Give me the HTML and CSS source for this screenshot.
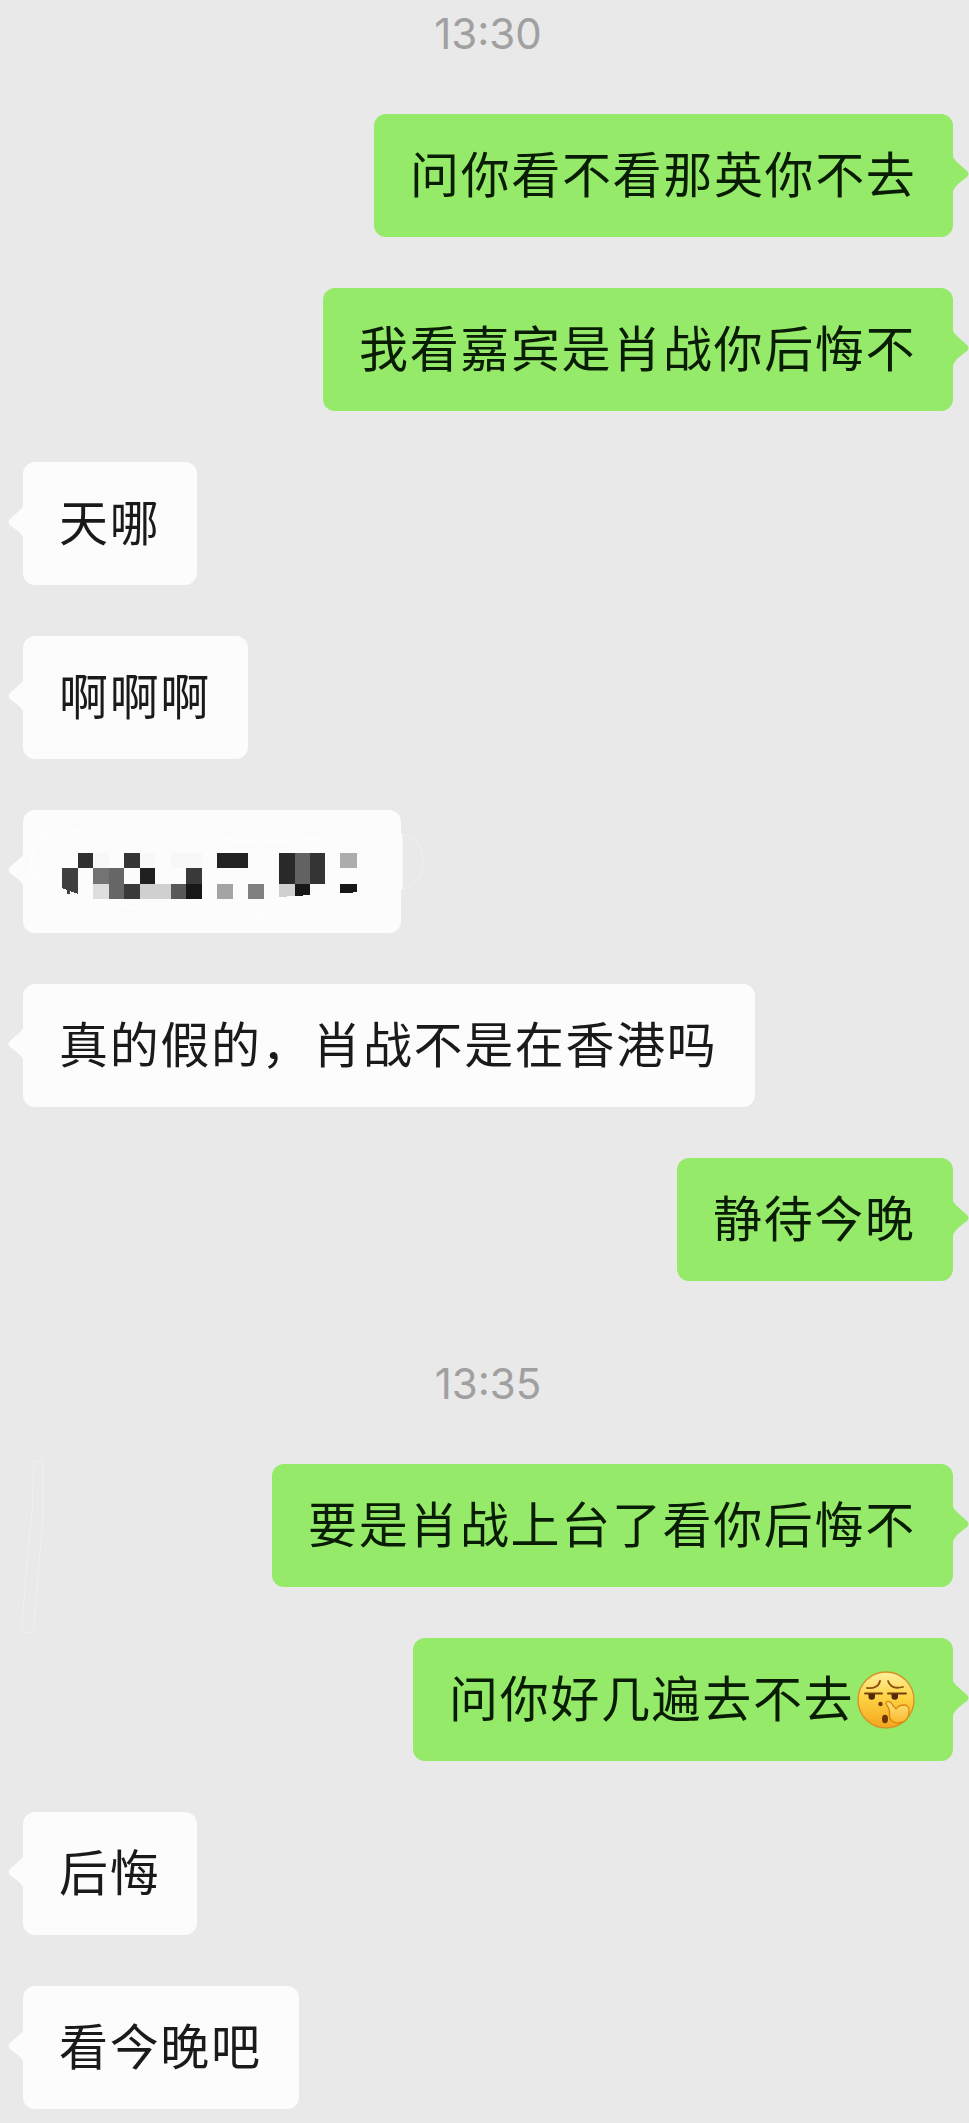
FILE: index.html
```html
<!DOCTYPE html>
<html lang="zh-CN">
<head>
<meta charset="utf-8">
<title>聊天</title>
<link rel="stylesheet" href="styles.css">
</head>
<body>
<main class="chat">
  <time class="stamp">13:30</time>
  <div class="bubble sent" style="--w:579px">问你看不看那英你不去<svg class="tail" viewBox="0 0 16 34"><path d="M0 0C2 3 3 4 5 6L14 14Q17 17 14 20L5 27Q2 30 0 34Z"/></svg></div>
  <div class="bubble sent" style="--w:630px">我看嘉宾是肖战你后悔不<svg class="tail" viewBox="0 0 16 34"><path d="M0 0C2 3 3 4 5 6L14 14Q17 17 14 20L5 27Q2 30 0 34Z"/></svg></div>
  <div class="bubble received" style="--w:174px">天哪<svg class="tail" viewBox="0 0 16 34"><path d="M0 0C2 3 3 4 5 6L14 14Q17 17 14 20L5 27Q2 30 0 34Z"/></svg></div>
  <div class="bubble received" style="--w:225px">啊啊啊<svg class="tail" viewBox="0 0 16 34"><path d="M0 0C2 3 3 4 5 6L14 14Q17 17 14 20L5 27Q2 30 0 34Z"/></svg></div>
  <div class="bubble received" style="--w:378px">
    <svg class="mosaic" viewBox="0 800 440 150">
      <path fill="#fcfcfc" d="M400 834H402.5V889H400Z"/>
      <g fill="none" stroke="#fff" stroke-width="1.2">
        <path d="M31 868C31 845 42 829 60 829C78 829 82 834 96 834H180C213 834 228 842 260 842C300 841 350 834 399 834"/>
        <path d="M31 868C38 888 75 887 98 899C129 906 155 917 190 917H249C276 916 271 895 290 895C323 891 361 889 402 889"/>
      </g>
      <path fill="none" stroke="#f1f1f1" d="M403 835C417 837 423 850 423 861C423 876 414 887 402 889"/>
      <g shape-rendering="crispEdges">
        <path fill="#303030" d="M78 853h15v15H78z"/>
        <path fill="#353535" d="M124 853h16v15h-16z"/>
        <path fill="#f8f8f8" d="M93 853h16v15H93zM140 853h15v15h-15zM171 853h31v15h-31z"/>
        <path fill="#404040" d="M62 868h16v26l-8-3v3h-3v-4l-5-2z"/>
        <path fill="#737373" d="M93 868h16v16H93z"/>
        <path fill="#666" d="M109 868h15v31h-15z"/>
        <path fill="#202020" d="M140 868h15v16h-15z"/>
        <path fill="#393939" d="M186 868h16v16h-16zM124 884h16v15h-16z"/>
        <path fill="#dedede" d="M93 884h16v15H93z"/>
        <path fill="#d0d0d0" d="M140 884h31v15h-31zM279 884h16v12l-16 1z"/>
        <path fill="#585858" d="M171 884h15v15h-15z"/>
        <path fill="#171717" d="M186 884h16v15h-16zM295 884h15v11l-15 1zM340 884h17v8l-9 1h-8z"/>
        <path fill="#232323" d="M217 853h31v15h-31z"/>
        <path fill="#a4a4a4" d="M217 884h16v15h-16z"/>
        <path fill="#808080" d="M248 884h16v15h-16z"/>
        <path fill="#292929" d="M279 853h16v31h-16z"/>
        <path fill="#626262" d="M295 853h15v31h-15z"/>
        <path fill="#343434" d="M310 853h15v31h-15z"/>
        <path fill="#acacac" d="M340 853h17v15h-17z"/>
      </g>
    </svg>
    <svg class="tail" viewBox="0 0 16 34"><path d="M0 0C2 3 3 4 5 6L14 14Q17 17 14 20L5 27Q2 30 0 34Z"/></svg>
  </div>
  <div class="bubble received" style="--w:732px">真的假的，肖战不是在香港吗<svg class="tail" viewBox="0 0 16 34"><path d="M0 0C2 3 3 4 5 6L14 14Q17 17 14 20L5 27Q2 30 0 34Z"/></svg></div>
  <div class="bubble sent" style="--w:276px">静待今晚<svg class="tail" viewBox="0 0 16 34"><path d="M0 0C2 3 3 4 5 6L14 14Q17 17 14 20L5 27Q2 30 0 34Z"/></svg></div>
  <time class="stamp later">13:35</time>
  <div class="bubble sent" style="--w:681px">要是肖战上台了看你后悔不<svg class="tail" viewBox="0 0 16 34"><path d="M0 0C2 3 3 4 5 6L14 14Q17 17 14 20L5 27Q2 30 0 34Z"/></svg></div>
  <div class="bubble sent" style="--w:540px">问你好几遍去不去<svg class="emoji" viewBox="0 0 58 58">
      <defs>
        <linearGradient id="face" x1="0" y1="0" x2="0" y2="1"><stop offset="0" stop-color="#fff0a0"/><stop offset=".45" stop-color="#fed344"/><stop offset="1" stop-color="#f5a51d"/></linearGradient>
        <linearGradient id="hand" x1="0" y1="0" x2="0" y2="1"><stop offset="0" stop-color="#ffe27a"/><stop offset="1" stop-color="#fbb72c"/></linearGradient>
      </defs>
      <circle cx="29" cy="29" r="28" fill="url(#face)" stroke="#d99025" stroke-width="1.3"/>
      <g fill="none" stroke="#8a4f0b" stroke-width="1.8" stroke-linecap="round">
        <path d="M10 17C17 18 22 15 23 10M31 10C33 16 38 18 46 16"/>
      </g>
      <path d="M8 22.5H25M31 22.5H49" stroke="#744009" stroke-width="1.8" stroke-linecap="round"/>
      <path d="M11.5 23h6.5v2.500a3.200 3.200 0 0 1-6.500 0zM34.500 23H41v2.500a3.200 3.200 0 0 1-6.500 0z" fill="#50290b"/>
      <circle cx="23.500" cy="33" r="2.200" fill="#6b3b0b"/>
      <ellipse cx="28" cy="48" rx="3" ry="4.200" fill="#693406"/>
      <path d="M29.500 31C31.500 29.500 34 31 36 34.500L39 38C41 35 44 34 47 34C51 34 52.500 37 52 41C52 47 48 51.500 42 52C36 52.500 32 49 32.500 44C33 40 32 37 30 34.500C29 33 28.500 32 29.500 31Z" fill="url(#hand)" stroke="#d98713" stroke-width="1.3"/>
    </svg><svg class="tail" viewBox="0 0 16 34"><path d="M0 0C2 3 3 4 5 6L14 14Q17 17 14 20L5 27Q2 30 0 34Z"/></svg></div>
  <div class="bubble received" style="--w:174px">后悔<svg class="tail" viewBox="0 0 16 34"><path d="M0 0C2 3 3 4 5 6L14 14Q17 17 14 20L5 27Q2 30 0 34Z"/></svg></div>
  <div class="bubble received" style="--w:276px">看今晚吧<svg class="tail" viewBox="0 0 16 34"><path d="M0 0C2 3 3 4 5 6L14 14Q17 17 14 20L5 27Q2 30 0 34Z"/></svg></div>
  <svg class="trace" viewBox="0 0 24 176"><path d="M11 52L13 2Q18-1 22 3V56L13 165Q12 173 6 173Q1 173 1 164L5 113Z"/></svg>
</main>
</body>
</html>
```
FILE: styles.css
```css
* { box-sizing: border-box; }
body { margin: 0; background: #e9e9e9; }
.chat {
  position: relative;
  display: flex;
  flex-direction: column;
  gap: 51px;
  height: 2123px;
  padding: 0 16px 0 23px;
  overflow: hidden;
  font-family: "Noto Sans CJK SC", sans-serif;
}
.stamp {
  flex: none;
  height: 63px;
  padding-top: 9px;
  text-align: center;
  font: 400 42px/50px Inter, sans-serif;
  color: #a0a0a0;
}
.later { height: 81px; padding-top: 27px; }
.bubble {
  position: relative;
  flex: none;
  display: flex;
  align-items: center;
  width: var(--w);
  height: 123px;
  padding: 0 0 7px 36px;
  border-radius: 12px;
  font-size: 49px;
  line-height: 70px;
  letter-spacing: 1.65px;
  white-space: nowrap;
}
.sent { align-self: flex-end; background: #95ea69; color: #091c04; fill: #95ea69; }
.received { align-self: flex-start; background: #fcfcfc; color: #1a1a1a; fill: #fcfcfc; }
.tail { position: absolute; top: 43px; width: 16px; height: 34px; }
.sent .tail { left: calc(100% - .5px); }
.received .tail { right: calc(100% - .5px); transform: scaleX(-1); }
.emoji { flex: none; width: 58px; height: 58px; margin: 7px 0 0 3px; }
.mosaic { position: absolute; left: -23px; top: -10px; width: 440px; height: 150px; }
.trace {
  position: absolute;
  left: 21px;
  top: 1460px;
  width: 24px;
  height: 176px;
  fill: none;
  stroke: #f1f1f1;
}
```
